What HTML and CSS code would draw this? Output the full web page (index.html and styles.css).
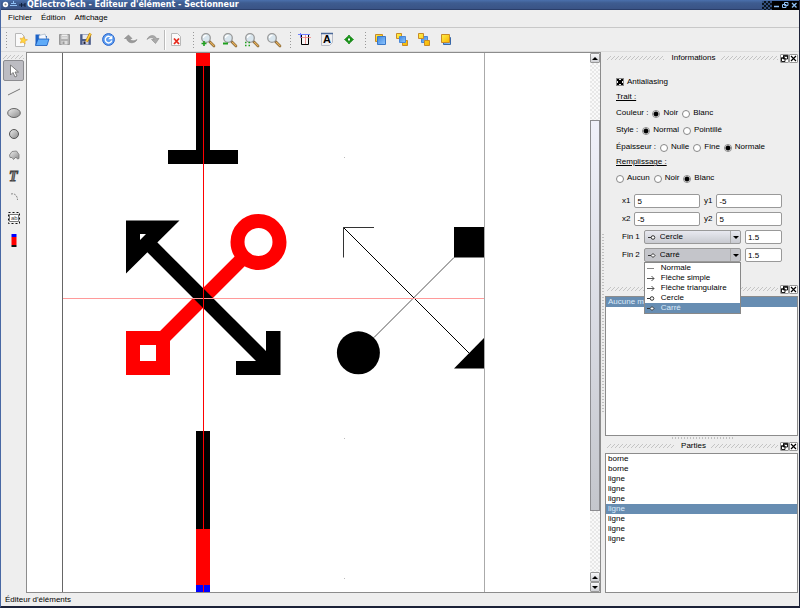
FILE: index.html
```html
<!DOCTYPE html>
<html lang="fr">
<head>
    <meta charset="UTF-8">
    <meta name="viewport" content="width=device-width, initial-scale=1.0">
    <title>QElectroTech - Éditeur d'élément - Sectionneur</title>
    <link rel="stylesheet" href="styles.css">
</head>
<body>

    <!-- Formes communes aux icônes -->
    <svg class="defs" width="0" height="0" aria-hidden="true">
        <defs>
            <linearGradient id="blue" x1="0" y1="0" x2="1" y2="1">
                <stop offset="0" stop-color="#3f86dc"/><stop offset="1" stop-color="#8fc6ff"/>
            </linearGradient>
            <linearGradient id="gold" x1="0" y1="0" x2="1" y2="1">
                <stop offset="0" stop-color="#fff04a"/><stop offset="1" stop-color="#f8b400"/>
            </linearGradient>
            <linearGradient id="grey" x1="0" y1="0" x2="1" y2="1">
                <stop offset="0" stop-color="#eeeeee"/><stop offset="1" stop-color="#8a8a8a"/>
            </linearGradient>
            <symbol id="lens" viewBox="0 0 16 16">
                <path d="M9.500 9.500l4.500 4.500" stroke="#8a6a3a" stroke-width="2.600" stroke-linecap="round"/>
                <path d="M10.500 10.300l3.500 3.500" stroke="#e9b25c" stroke-width="1.200" stroke-linecap="round"/>
                <circle cx="6" cy="6" r="4.300" fill="#d9e6ee" stroke="#9a9a9a" stroke-width="1.300"/>
                <path d="M3.500 6a2.600 2.600 0 0 1 3-2.600" fill="none" stroke="#fff" stroke-width="1.200"/>
            </symbol>
            <symbol id="float" viewBox="0 0 7 7">
                <path d="M2.500 1h4v3h-4zM.5 3h3.500v3.500h-3.500z" fill="#fff" stroke="#000" stroke-width=".9"/>
                <path d="M2 .8h5M0 3h4" stroke="#000" stroke-width="1.200"/>
            </symbol>
            <symbol id="cross" viewBox="0 0 7 7">
                <path d="M1 1l5 5M6 1l-5 5" stroke="#000" stroke-width="1.200"/>
            </symbol>
            <symbol id="end-line" viewBox="0 0 8 8"><path d="M0 4.500h7" stroke="#888"/></symbol>
            <symbol id="end-arrow" viewBox="0 0 8 8"><path d="M0 4.500h7M4.500 2l2.500 2.500l-2.500 2.500" fill="none" stroke="#444" stroke-width=".9"/></symbol>
            <symbol id="end-circle" viewBox="0 0 8 8"><path d="M0 4.500h3" stroke="#333"/><circle cx="5" cy="4.500" r="1.800" fill="#fff" stroke="#333"/></symbol>
            <symbol id="end-square" viewBox="0 0 8 8"><path d="M0 4.500h3" stroke="#333"/><path d="M5 2.500l2 2l-2 2l-2-2z" fill="#fff" stroke="#333"/></symbol>
        </defs>
    </svg>

    <header class="titlebar">
        <svg class="title-icons" width="26" height="10" viewBox="0 0 26 10" aria-hidden="true">
            <circle cx="4.500" cy="4.500" r="2.700" fill="#fff"/><circle cx="4.500" cy="4.500" r="1" fill="#888"/>
            <path d="M12.500 1v2M10 3.500h5M9 5.500h7" stroke="#8fc0f5"/>
            <path d="M18 5h2M20.500 3v4M21 5h3M24 3v4" stroke="#10203c"/>
        </svg>
        <h1 class="window-title">QElectroTech - Éditeur d'élément - Sectionneur</h1>
        <div class="window-buttons">
            <button type="button" aria-label="Réduire"><svg width="9" height="9" viewBox="0 0 9 9"><path d="M2 5.500h5" stroke="#8fc0f5" stroke-width="1.500"/></svg></button>
            <button type="button" aria-label="Restaurer"><svg width="9" height="9" viewBox="0 0 9 9"><path d="M3.500 1.500h3.500v3h-3.500zM1.500 3.500h3.500v3h-3.500z" fill="#000" stroke="#8fc0f5"/></svg></button>
            <button type="button" aria-label="Fermer"><svg width="9" height="9" viewBox="0 0 9 9"><path d="M2 2l4.500 4.500M6.500 2l-4.500 4.500" stroke="#8fc0f5" stroke-width="1.300"/></svg></button>
        </div>
    </header>

    <nav class="menubar">
        <a href="#fichier">Fichier</a>
        <a href="#edition">Édition</a>
        <a href="#affichage">Affichage</a>
    </nav>

    <div class="toolbar">
        <span class="grip"></span>
        <button type="button" aria-label="Nouveau">
            <svg width="16" height="16" viewBox="0 0 16 16"><path d="M2.500 1.500h6l3 3v10h-9z" fill="#fafafa" stroke="#b8b8b8"/><path d="M10.500 4.500l1.200 2.500 2.800.8-2.500 1.400.2 2.800-2.200-1.800-2.700.8 1-2.500-1.300-2.300 2.600.3z" fill="#ffd640" stroke="#e8a83a" stroke-width=".6"/></svg>
        </button>
        <button type="button" aria-label="Ouvrir">
            <svg width="16" height="16" viewBox="0 0 16 16"><path d="M.5 13v-10.500h4.500l1 1.500h6v9z" fill="#1c62c8"/><path d="M4 3.500l6-1.500 2 6h-8z" fill="#f4f8ff" stroke="#9ab" stroke-width=".6"/><path d="M.5 13.500l2.500-6.500h11l-2 6.500z" fill="#5fabf8" stroke="#1458bb" stroke-width=".8"/></svg>
        </button>
        <button type="button" aria-label="Enregistrer">
            <svg width="16" height="16" viewBox="0 0 16 16"><path d="M2.500 2.500h10v10h-10z" fill="#b0b0b0" stroke="#999"/><path d="M4.500 2.500h6v4.500h-6z" fill="#eee"/><path d="M5 4.500h5M5 6h5" stroke="#bbb" stroke-width=".7"/><path d="M4.500 9h6v3.500h-6z" fill="#ddd"/><path d="M5.500 9.500h2v2.500h-2z" fill="#999"/></svg>
        </button>
        <button type="button" aria-label="Enregistrer sous">
            <svg width="16" height="16" viewBox="0 0 16 16"><path d="M1.500 2.500h10v10h-10z" fill="#4a5c88" stroke="#66749a"/><path d="M3.500 2.500h6v4.500h-6z" fill="#e6e9f2"/><path d="M3.500 9h6v3.500h-6z" fill="#ccd"/><path d="M4.500 9.500h2v2.500h-2z" fill="#223"/><path d="M11.500 1.500l-4 8" stroke="#c88a10" stroke-width="2.800"/><path d="M11.500 1.500l-4 8" stroke="#ffd34a" stroke-width="1.400"/></svg>
        </button>
        <button type="button" aria-label="Recharger">
            <svg width="16" height="16" viewBox="0 0 16 16"><circle cx="7.500" cy="7.500" r="5.900" fill="#5c9cf0" stroke="#2a66cc"/><path d="M10.500 6a3.300 3.300 0 1 0 .3 2.500" fill="none" stroke="#fff" stroke-width="1.400"/><path d="M7 7.300h4.300v-3.800z" fill="#fff"/></svg>
        </button>
        <button type="button" aria-label="Annuler">
            <svg width="16" height="16" viewBox="0 0 16 16"><path d="M1.500 6.500l4-3.500 3.500 3.500h-2c.5 2.500 4 3 7 1-1.500 4-9 5-10.500-1z" fill="#999" stroke="#858585" stroke-width=".6"/></svg>
        </button>
        <button type="button" aria-label="Refaire">
            <svg width="16" height="16" viewBox="0 0 16 16"><path d="M2 7.500c2-5 8-5 9.500-1h2.500l-3.500 5-4-4h2.500c-1-2.500-4-2.500-7 0z" fill="#aaa" stroke="#8c8c8c" stroke-width=".6"/></svg>
        </button>
        <span class="separator"></span>
        <button type="button" aria-label="Supprimer">
            <svg width="16" height="16" viewBox="0 0 16 16"><path d="M2.500 1.500h6l3 3v9h-9z" fill="#fafafa" stroke="#b8b8b8"/><path d="M5 6.500l5 5.500M10 6.500l-5 5.500" stroke="#e62a1c" stroke-width="1.800"/></svg>
        </button>
        <span class="grip"></span>
        <button type="button" aria-label="Zoom avant">
            <svg width="16" height="16" viewBox="0 0 16 16"><use href="#lens"/><path d="M1.500 11.500h5M4 9v5" stroke="#1fa01f" stroke-width="1.600"/></svg>
        </button>
        <button type="button" aria-label="Zoom arrière">
            <svg width="16" height="16" viewBox="0 0 16 16"><use href="#lens"/><path d="M1 11.500h5" stroke="#1fa01f" stroke-width="2"/></svg>
        </button>
        <button type="button" aria-label="Zoom adapté">
            <svg width="16" height="16" viewBox="0 0 16 16"><use href="#lens"/><path d="M1 10.500h5M1 13.500h5" stroke="#1fa01f" stroke-width="1.300" stroke-dasharray="1.500 2"/></svg>
        </button>
        <button type="button" aria-label="Pas de zoom">
            <svg width="16" height="16" viewBox="0 0 16 16"><use href="#lens"/></svg>
        </button>
        <span class="grip"></span>
        <button type="button" aria-label="Taille et point de saisie">
            <svg width="16" height="16" viewBox="0 0 16 16"><path d="M4.500 2v10.500h7v-10" fill="#f6f6f6" stroke="#000"/><path d="M1 2.500h12M3.500 1v5" stroke="#7080ff"/><path d="M4 5.500h10M8.500 3v9" stroke="#f08080" stroke-width=".8"/></svg>
        </button>
        <button type="button" aria-label="Noms">
            <svg width="16" height="16" viewBox="0 0 16 16"><path d="M2.500 1.500h11v9l-3 3h-8z" fill="#f0f0f2" stroke="#b8bcc8"/><path d="M2 1.500h12" stroke="#4a6898" stroke-width="1.500"/><text class="icon-letter" x="4" y="11">A</text></svg>
        </button>
        <button type="button" aria-label="Orientations">
            <svg width="16" height="16" viewBox="0 0 16 16"><path d="M8 3l2 2.500h-4zM8 12l2-2.500h-4zM3.500 7.500l2.500-2v4zM12.500 7.500l-2.500-2v4z" fill="#1fae1f" stroke="#0a7a0a" stroke-width=".7"/><path d="M6.500 6h3v3h-3z" fill="#fff" stroke="#1a8a1a"/></svg>
        </button>
        <span class="grip"></span>
        <button type="button" aria-label="Amener au premier plan">
            <svg width="16" height="16" viewBox="0 0 16 16"><path d="M3.500 2.500h7v7h-7z" fill="url(#gold)" stroke="#c88a28"/><path d="M5.500 4.500h8v8h-8z" fill="url(#blue)" stroke="#3a78c8"/></svg>
        </button>
        <button type="button" aria-label="Rapprocher">
            <svg width="16" height="16" viewBox="0 0 16 16"><path d="M2.500 1.500h5v5h-5zM8.500 8.500h5v5h-5z" fill="url(#gold)" stroke="#c88a28"/><path d="M5.500 4.500h6v6h-6z" fill="url(#blue)" stroke="#4a88d8"/></svg>
        </button>
        <button type="button" aria-label="Éloigner">
            <svg width="16" height="16" viewBox="0 0 16 16"><path d="M5.500 4.500h6v6h-6z" fill="url(#blue)" stroke="#4a88d8"/><path d="M2.500 1.500h5v5h-5zM8.500 8.500h5v5h-5z" fill="url(#gold)" stroke="#c88a28"/></svg>
        </button>
        <button type="button" aria-label="Envoyer au fond">
            <svg width="16" height="16" viewBox="0 0 16 16"><path d="M5.500 5.500h7v7h-7z" fill="url(#blue)" stroke="#3a68a8"/><path d="M3.500 2.500h8v8h-8z" fill="url(#gold)" stroke="#c88a28"/></svg>
        </button>
    </div>

    <main class="workspace">
        <aside class="tools">
            <span class="hatch"></span>
            <button type="button" class="active" aria-label="Sélection">
                <svg width="16" height="16" viewBox="0 0 16 16"><path d="M4.500 2v10l2.500-2.500 2 4.500 2-1-2-4h3.500z" fill="#fff" stroke="#666" stroke-width=".8"/></svg>
            </button>
            <button type="button" aria-label="Ligne">
                <svg width="16" height="16" viewBox="0 0 16 16"><path d="M2 11l12-6" stroke="#777"/></svg>
            </button>
            <button type="button" aria-label="Ellipse">
                <svg width="16" height="16" viewBox="0 0 16 16"><ellipse cx="8" cy="8" rx="6.300" ry="4.500" fill="url(#grey)" stroke="#666"/></svg>
            </button>
            <button type="button" aria-label="Cercle">
                <svg width="16" height="16" viewBox="0 0 16 16"><circle cx="8" cy="8" r="4.500" fill="url(#grey)" stroke="#555"/></svg>
            </button>
            <button type="button" aria-label="Polygone">
                <svg width="16" height="16" viewBox="0 0 16 16"><path d="M3.500 8l2.500-3.500 4.500-.5 2.500 3.500v4l-1.500.5-1.500-2-2.500 2.500-1.500-2h-2z" fill="url(#grey)" stroke="#777" stroke-width=".8"/></svg>
            </button>
            <button type="button" aria-label="Texte">
                <svg width="16" height="16" viewBox="0 0 16 16"><text class="icon-text" x="3" y="13">T</text></svg>
            </button>
            <button type="button" aria-label="Arc">
                <svg width="16" height="16" viewBox="0 0 16 16"><path d="M5 5c4-1 6.500 2 6.500 6" fill="none" stroke="#888" stroke-dasharray="2 1"/></svg>
            </button>
            <button type="button" aria-label="Champ de texte">
                <svg width="16" height="16" viewBox="0 0 16 16"><path d="M2.500 2.500h11v11h-11z" fill="none" stroke="#111" stroke-dasharray="2 2"/><path d="M3.500 4.500h9v7h-9z" fill="#fff" stroke="#777"/><text class="icon-tiny" x="5" y="10">ab</text></svg>
            </button>
            <button type="button" aria-label="Borne">
                <svg width="16" height="16" viewBox="0 0 16 16"><path d="M5.500 3h5v3h-5z" fill="#00f"/><path d="M5.500 6h5v8h-5z" fill="#f00"/><path d="M5.500 14h5v2h-5z" fill="#111"/></svg>
            </button>
        </aside>

        <section class="view">
            <svg class="drawing" viewBox="27 53 563 539" preserveAspectRatio="xMinYMin meet">
                <!-- borne du haut -->
                <path d="M196 53h14v13h-14z" fill="#f00"/>
                <path d="M196 66h14v84h28v14h-70v-14h28z"/>
                <!-- borne du bas -->
                <path d="M196 431h14v98h-14z"/>
                <path d="M196 529h14v56h-14z" fill="#f00"/>
                <path d="M196 585h14v7h-14z" fill="#00f"/>

                <!-- lignes épaisses -->
                <g fill="none" stroke="#f00" stroke-width="14">
                    <path d="M243 258L162 339"/>
                    <circle cx="258.500" cy="242" r="21"/>
                    <path d="M133 338h30v30h-30z"/>
                </g>
                <path d="M147 242L270 365" stroke="#000" stroke-width="14"/>
                <path d="M126 220.500h53.500l-53.500 53zM140 234v6l6-6z" fill-rule="evenodd"/>
                <path d="M266 331h14.500v44h-44.500v-14h30z"/>

                <!-- lignes fines -->
                <path d="M374 337.500L454 257.500" stroke="#555"/>
                <path d="M343.500 227.500L469.500 353.500" stroke="#000"/>
                <path d="M343.500 257.500v-30h30.500" fill="none" stroke="#333"/>
                <path d="M454 227h30v30.500h-30z"/>
                <circle cx="358.400" cy="352.800" r="21.500"/>
                <path d="M454 368.500l30-30.500v30.500z"/>

                <!-- axes et bords de la page -->
                <path d="M62 298.500h422" stroke="#ff9a9a"/>
                <path d="M203.500 53v539" stroke="#f00"/>
                <path d="M62.500 53v539" stroke="#666"/>
                <path d="M484.500 53v539" stroke="#aaa"/>
                <path d="M344 157.500h1M344 438.500h1M344 578.500h1" stroke="#bbb"/>
            </svg>
            <div class="scrollbar">
                <button type="button" aria-label="Monter"><span class="tri up"></span></button>
                <span class="track before"></span>
                <span class="thumb"></span>
                <span class="track after"></span>
                <button type="button" aria-label="Page haut"><span class="tri up"></span></button>
                <button type="button" aria-label="Descendre"><span class="tri down"></span></button>
            </div>
        </section>

        <span class="splitter"></span>

        <aside class="docks">
            <section class="dock">
                <div class="dock-title">
                    <span class="hatch"></span>
                    <h2>Informations</h2>
                    <span class="hatch"></span>
                    <button type="button" aria-label="Détacher"><svg width="7" height="7"><use href="#float"/></svg></button>
                    <button type="button" aria-label="Fermer"><svg width="7" height="7"><use href="#cross"/></svg></button>
                </div>
                <form class="infos">
                    <div class="line"><input type="checkbox" id="antialias" checked><label for="antialias">Antialiasing</label></div>
                    <div class="heading"><u>Trait :</u></div>
                    <div class="line">
                        <span>Couleur :</span>
                        <input type="radio" name="couleur" id="c-noir" checked><label for="c-noir">Noir</label>
                        <input type="radio" name="couleur" id="c-blanc"><label for="c-blanc">Blanc</label>
                    </div>
                    <div class="line">
                        <span>Style :</span>
                        <input type="radio" name="style" id="s-normal" checked><label for="s-normal">Normal</label>
                        <input type="radio" name="style" id="s-point"><label for="s-point">Pointillé</label>
                    </div>
                    <div class="line">
                        <span>Épaisseur :</span>
                        <input type="radio" name="epaisseur" id="e-nulle"><label for="e-nulle">Nulle</label>
                        <input type="radio" name="epaisseur" id="e-fine"><label for="e-fine">Fine</label>
                        <input type="radio" name="epaisseur" id="e-normale" checked><label for="e-normale">Normale</label>
                    </div>
                    <div class="heading"><u>Remplissage :</u></div>
                    <div class="line">
                        <input type="radio" name="remplissage" id="r-aucun"><label for="r-aucun">Aucun</label>
                        <input type="radio" name="remplissage" id="r-noir"><label for="r-noir">Noir</label>
                        <input type="radio" name="remplissage" id="r-blanc" checked><label for="r-blanc">Blanc</label>
                    </div>
                    <div class="fields">
                        <div class="field-row">
                            <label for="x1">x1</label><input type="text" id="x1" value="5">
                            <label for="y1">y1</label><input type="text" id="y1" value="-5">
                        </div>
                        <div class="field-row">
                            <label for="x2">x2</label><input type="text" id="x2" value="-5">
                            <label for="y2">y2</label><input type="text" id="y2" value="5">
                        </div>
                        <div class="field-row">
                            <label for="fin1">Fin 1</label>
                            <div class="combo">
                                <svg width="8" height="8"><use href="#end-circle"/></svg>
                                <select id="fin1"><option>Normale</option><option selected>Cercle</option><option>Carré</option></select>
                                <span class="combo-arrow"><span class="tri down"></span></span>
                            </div>
                            <input type="text" class="short" aria-label="Longueur fin 1" value="1.5">
                        </div>
                        <div class="field-row">
                            <label for="fin2">Fin 2</label>
                            <div class="combo open">
                                <svg width="8" height="8"><use href="#end-square"/></svg>
                                <select id="fin2"><option>Normale</option><option>Cercle</option><option selected>Carré</option></select>
                                <span class="combo-arrow"><span class="tri down"></span></span>
                                <ul class="popup">
                                    <li><svg width="8" height="8"><use href="#end-line"/></svg>Normale</li>
                                    <li><svg width="8" height="8"><use href="#end-arrow"/></svg>Flèche simple</li>
                                    <li><svg width="8" height="8"><use href="#end-arrow"/></svg>Flèche triangulaire</li>
                                    <li><svg width="8" height="8"><use href="#end-circle"/></svg>Cercle</li>
                                    <li class="selected"><svg width="8" height="8"><use href="#end-square"/></svg>Carré</li>
                                </ul>
                            </div>
                            <input type="text" class="short" aria-label="Longueur fin 2" value="1.5">
                        </div>
                    </div>
                </form>
            </section>

            <section class="dock stretch">
                <div class="dock-title">
                    <span class="hatch"></span>
                    <button type="button" aria-label="Détacher"><svg width="7" height="7"><use href="#float"/></svg></button>
                    <button type="button" aria-label="Fermer"><svg width="7" height="7"><use href="#cross"/></svg></button>
                </div>
                <ul class="list">
                    <li class="selected">Aucune modification</li>
                </ul>
            </section>

            <span class="splitter-h"></span>

            <section class="dock stretch">
                <div class="dock-title">
                    <span class="hatch"></span>
                    <h2>Parties</h2>
                    <span class="hatch"></span>
                    <button type="button" aria-label="Détacher"><svg width="7" height="7"><use href="#float"/></svg></button>
                    <button type="button" aria-label="Fermer"><svg width="7" height="7"><use href="#cross"/></svg></button>
                </div>
                <ul class="list">
                    <li>borne</li>
                    <li>borne</li>
                    <li>ligne</li>
                    <li>ligne</li>
                    <li>ligne</li>
                    <li class="selected">ligne</li>
                    <li>ligne</li>
                    <li>ligne</li>
                    <li>ligne</li>
                </ul>
            </section>
        </aside>
    </main>

    <footer class="statusbar">Éditeur d'éléments</footer>

</body>
</html>
```
FILE: styles.css
```css
* {
    box-sizing: border-box;
}
body {
    display: flex;
    flex-direction: column;
    height: 100vh;
    margin: 0;
    border-left: 1px solid #4868a4;
    border-right: 1px solid #1c2238;
    border-bottom: 2px solid #1c2238;
    background-color: #eeeeee;
    color: #000;
    font-family: "Liberation Sans", Arial, sans-serif;
    font-size: 8px;
    line-height: 10px;
    overflow: hidden;
}
button, input, select {
    margin: 0;
    padding: 0;
    border: none;
    background: none;
    color: inherit;
    font: inherit;
}
button {
    display: flex;
    align-items: center;
    justify-content: center;
}
ul {
    margin: 0;
    padding: 0;
    list-style: none;
}
svg {
    display: block;
    flex: none;
}
h1, h2 {
    margin: 0;
    font-size: 8px;
    font-weight: normal;
}
.defs {
    position: absolute;
}

/* Barre de titre */
.titlebar {
    display: flex;
    flex: none;
    align-items: center;
    height: 10px;
    background: linear-gradient(#4a70ac, #3e5c90 30%, #3a5486 85%, #22335c);
    color: #fff;
}
.window-title {
    flex: 1;
    font-family: "DejaVu Sans", sans-serif;
    font-weight: bold;
    white-space: nowrap;
}
.window-buttons {
    display: flex;
    height: 9px;
    padding-left: 10px;
    background: repeating-conic-gradient(#0c1420 0 25%, #33507e 0 50%) 0 0 / 4px 4px;
}
.window-buttons button {
    width: 9px;
    background-color: #000;
}

/* Menus et barre d'outils */
.menubar {
    display: flex;
    flex: none;
    gap: 9px;
    height: 18px;
    padding: 3px 7px;
    border-bottom: 1px solid #c8c8c8;
}
.menubar a {
    color: inherit;
    text-decoration: none;
}
.toolbar {
    display: flex;
    flex: none;
    align-items: center;
    height: 24px;
    border-bottom: 1px solid #dcdcdc;
}
.toolbar button {
    width: 22px;
    height: 22px;
}
.grip {
    width: 9px;
    height: 18px;
    background: radial-gradient(circle, #999 1px, transparent 1px) 4px 0 / 3px 3px repeat-y;
}
.separator {
    width: 2px;
    height: 20px;
    border-left: 1px solid #bbb;
    border-right: 1px solid #fff;
}
.icon-letter {
    font: bold 11px "Liberation Sans", sans-serif;
}
.icon-text {
    font: italic bold 14px "Liberation Serif", serif;
    fill: #999;
    stroke: #444;
}
.icon-tiny {
    font: 6px "Liberation Sans", sans-serif;
    fill: #444;
}

/* Zone de travail */
.workspace {
    display: flex;
    flex: 1;
    min-height: 0;
}
.tools {
    display: flex;
    flex: none;
    flex-direction: column;
    width: 25px;
    padding: 3px 2px;
}
.tools button {
    width: 21px;
    height: 21px;
}
.tools .active {
    border: 1px solid #8c8c90;
    border-radius: 2px;
    background-color: #bcbcc2;
}
.hatch {
    flex: 1;
    height: 4px;
    background: linear-gradient(135deg, transparent 42%, #c4c4c4 42%, #c4c4c4 58%, transparent 58%) 0 0 / 4px 4px;
}
.tools .hatch {
    flex: none;
    margin-bottom: 1px;
}
.view {
    display: flex;
    flex: 1;
    min-width: 0;
    border: 1px solid #8c8c8c;
    background-color: #fff;
}
.drawing {
    flex: 1;
    min-width: 0;
    height: 100%;
}
.scrollbar {
    display: flex;
    flex: none;
    flex-direction: column;
    width: 10px;
}
.scrollbar button {
    flex: none;
    height: 10px;
    border: 1px solid #999;
    border-radius: 1px;
    background: linear-gradient(#f8f8fa, #cfd0d4);
}
.track {
    background: repeating-conic-gradient(#e8e8e8 0 25%, #fafafa 0 50%) 0 0 / 4px 4px;
}
.before {
    flex: 57;
}
.thumb {
    flex: 391;
    border: 1px solid #8c8c90;
    background: linear-gradient(#f0f1fa, #c4c6cc);
}
.after {
    flex: 61;
}
.tri {
    border: 3px solid transparent;
}
.up {
    border-top: none;
    border-bottom-color: #000;
}
.down {
    border-bottom: none;
    border-top-color: #000;
}
.splitter {
    flex: none;
    align-self: center;
    width: 4px;
    height: 180px;
    background: radial-gradient(circle, #c0c0c0 1px, transparent 1px) 0 0 / 4px 3px;
}
.splitter-h {
    flex: none;
    align-self: center;
    width: 62px;
    height: 4px;
    background: radial-gradient(circle, #c0c0c0 1px, transparent 1px) 0 0 / 3px 4px;
}

/* Panneaux */
.docks {
    display: flex;
    flex: none;
    flex-direction: column;
    width: 194px;
}
.dock {
    display: flex;
    flex: none;
    flex-direction: column;
}
.stretch {
    flex: 1;
    min-height: 0;
}
.dock-title {
    display: flex;
    flex: none;
    align-items: center;
    height: 12px;
    margin-bottom: 1px;
    padding: 0 1px 0 2px;
}
.dock-title h2 {
    padding: 0 5px;
}
.dock-title button {
    width: 9px;
    height: 9px;
    border: 1px solid #999;
    border-radius: 1px;
    background-color: #fff;
}
.dock-title .hatch {
    margin-right: 2px;
}
.list {
    flex: 1;
    min-height: 0;
    margin-right: 1px;
    border: 1px solid #8c8c8c;
    background-color: #fff;
}
.list li {
    padding-left: 2px;
}
.selected {
    background-color: #678db2;
    color: #dcebfa;
}
.infos {
    margin: 0;
    padding: 8px 17px 19px 11px;
}
.line {
    display: flex;
    align-items: center;
    height: 17px;
}
.heading {
    height: 14px;
    padding-top: 2px;
}
.line label {
    margin: 0 4px 0 3px;
}
.line span {
    margin-right: 4px;
}
.line input {
    flex: none;
    width: 8px;
    height: 8px;
    appearance: none;
    border: 1px solid #888;
    background-color: #fff;
}
.line input[type="radio"] {
    margin-top: 2px;
    border-radius: 50%;
}
.line input[type="radio"]:checked {
    background: radial-gradient(circle, #000 2px, #fff 3px);
}
.line input[type="checkbox"]:checked {
    background:
        linear-gradient(45deg, transparent 38%, #000 38%, #000 62%, transparent 62%),
        linear-gradient(135deg, transparent 38%, #000 38%, #000 62%, transparent 62%);
}
.fields {
    margin-top: 6px;
    padding-left: 6px;
}
.field-row {
    display: flex;
    align-items: center;
    gap: 4px;
    height: 18px;
}
.field-row > input {
    flex: 1;
    min-width: 0;
    height: 14px;
    padding: 0 2px;
    border: 1px solid #999;
    border-radius: 2px;
    background-color: #fff;
}
.field-row > .short {
    flex: none;
    width: 37px;
}
.combo {
    position: relative;
    display: flex;
    flex: 1;
    align-items: center;
    height: 14px;
    padding-left: 3px;
    border: 1px solid #999;
    border-radius: 2px;
    background: linear-gradient(#e8e9f0, #c8cad0);
}
.open {
    background: #c4c5ca;
}
.combo select {
    flex: 1;
    min-width: 0;
    padding-left: 4px;
    appearance: none;
}
.combo-arrow {
    display: flex;
    align-items: center;
    justify-content: center;
    align-self: stretch;
    width: 10px;
    border-left: 1px solid #aaa;
}
.popup {
    position: absolute;
    z-index: 1;
    top: 13px;
    left: -1px;
    right: -1px;
    border: 1px solid #888;
    background-color: #fff;
}
.popup li {
    display: flex;
    align-items: center;
    gap: 6px;
    height: 10px;
    padding-left: 2px;
}

.statusbar {
    flex: none;
    height: 13px;
    padding: 2px 4px;
}
```
